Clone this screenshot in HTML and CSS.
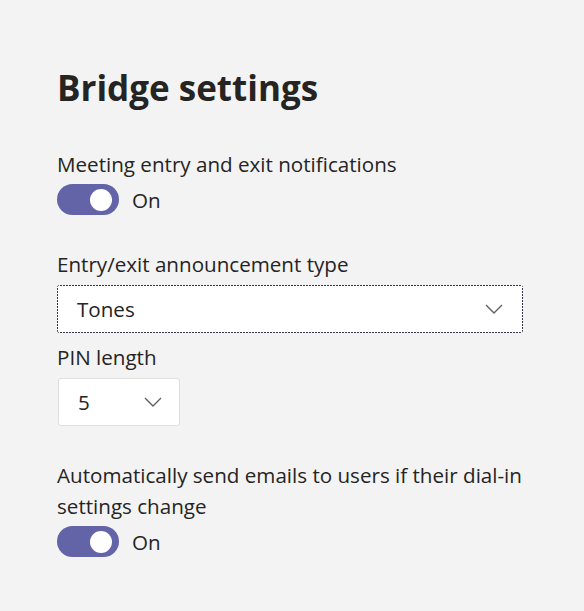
FILE: index.html
```html
<!DOCTYPE html>
<html lang="en">

<head>
    <meta charset="UTF-8">
    <meta name="viewport" content="width=device-width, initial-scale=1.0">
    <title>Bridge settings</title>
    <link rel="stylesheet" href="styles.css">
</head>

<body>

    <div class="panel">
        <h1 class="title">Bridge settings</h1>

        <div class="field field-first">
            <div class="label">Meeting entry and exit notifications</div>
            <div class="toggle-row">
                <span class="toggle"><span class="knob"></span></span>
                <span class="toggle-text">On</span>
            </div>
        </div>

        <div class="field">
            <div class="label">Entry/exit announcement type</div>
            <div class="select select-wide select-focused">
                <span class="select-value">Tones</span>
                <svg class="chevron" width="18" height="10" viewBox="0 0 18 10">
                    <path d="M1 1 L9 9 L17 1" fill="none" stroke="#616161" stroke-width="1.4" />
                </svg>
            </div>
        </div>

        <div class="field field-tight">
            <div class="label">PIN length</div>
            <div class="select select-small">
                <span class="select-value">5</span>
                <svg class="chevron" width="18" height="10" viewBox="0 0 18 10">
                    <path d="M1 1 L9 9 L17 1" fill="none" stroke="#616161" stroke-width="1.4" />
                </svg>
            </div>
        </div>

        <div class="field">
            <div class="label">Automatically send emails to users if their dial-in settings change</div>
            <div class="toggle-row">
                <span class="toggle"><span class="knob"></span></span>
                <span class="toggle-text">On</span>
            </div>
        </div>
    </div>

</body>

</html>
```

FILE: styles.css
```css
* {
    margin: 0;
    padding: 0;
    box-sizing: border-box;
}

body {
    font-family: "Open Sans", "Noto Sans", sans-serif;
    background-color: #f3f3f3;
    color: #252423;
}

.panel {
    width: 466px;
    margin-left: 57px;
    padding-top: 66px;
}

.title {
    font-size: 35px;
    font-weight: 700;
    line-height: 44px;
    color: #252423;
    margin-bottom: 39px;
}

.label {
    font-size: 20.6px;
    line-height: 31px;
}

.field {
    margin-top: 34px;
}

.field-first {
    margin-top: 0;
}

.field-tight {
    margin-top: 9px;
}

.toggle-row {
    display: flex;
    align-items: center;
    gap: 13px;
    margin-top: 4px;
}

.toggle {
    width: 62px;
    height: 31px;
    border-radius: 16px;
    background-color: #6264a7;
    display: flex;
    align-items: center;
    justify-content: flex-end;
    padding-right: 7px;
}

.knob {
    width: 22px;
    height: 22px;
    border-radius: 50%;
    background-color: #ffffff;
}

.toggle-text {
    font-size: 20.6px;
}

.select {
    display: flex;
    align-items: center;
    justify-content: space-between;
    height: 48px;
    background-color: #ffffff;
    border: 1px solid #e1dfdd;
    border-radius: 3px;
    padding: 0 19px 0 19px;
    margin-top: 5px;
    font-size: 20.6px;
}

.select-wide {
    width: 466px;
}

/* focus ring drawn as 2px dots with 1px gaps */
.select-focused {
    border: none;
    padding: 0 20px;
    background:
        repeating-linear-gradient(90deg, #33344a 0 2px, transparent 2px 3px) top / 100% 1px no-repeat,
        repeating-linear-gradient(90deg, #33344a 0 2px, transparent 2px 3px) bottom / 100% 1px no-repeat,
        repeating-linear-gradient(180deg, #33344a 0 2px, transparent 2px 3px) left / 1px 100% no-repeat,
        repeating-linear-gradient(180deg, #33344a 0 2px, transparent 2px 3px) right / 1px 100% no-repeat,
        #ffffff;
}

.select-small {
    width: 122px;
    margin-left: 1px;
    padding-right: 17px;
}

.chevron {
    display: block;
}
```
